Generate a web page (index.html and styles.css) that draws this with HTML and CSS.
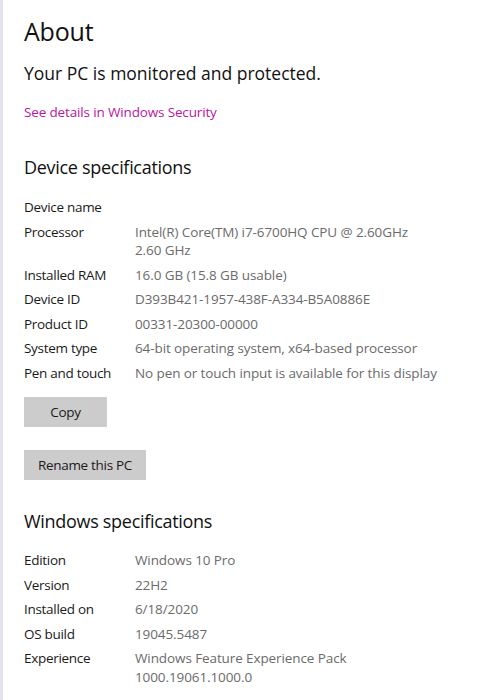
FILE: index.html
```html
<!DOCTYPE html>
<html>
<head>
<meta charset="utf-8">
<link rel="stylesheet" href="styles.css">
</head>
<body>
<div class="page">
  <h1 class="title">About</h1>
  <p class="status">Your PC is monitored and protected.</p>
  <a class="link" href="#">See details in Windows Security</a>

  <h2 class="section">Device specifications</h2>
  <div class="specs">
    <div class="row"><div class="label">Device name</div><div class="value"></div></div>
    <div class="row"><div class="label">Processor</div><div class="value">Intel(R) Core(TM) i7-6700HQ CPU @ 2.60GHz<br>2.60 GHz</div></div>
    <div class="row"><div class="label">Installed RAM</div><div class="value">16.0 GB (15.8 GB usable)</div></div>
    <div class="row"><div class="label">Device ID</div><div class="value">D393B421-1957-438F-A334-B5A0886E</div></div>
    <div class="row"><div class="label">Product ID</div><div class="value">00331-20300-00000</div></div>
    <div class="row"><div class="label">System type</div><div class="value">64-bit operating system, x64-based processor</div></div>
    <div class="row"><div class="label">Pen and touch</div><div class="value">No pen or touch input is available for this display</div></div>
  </div>
  <button class="btn btn-copy">Copy</button>
  <button class="btn btn-rename">Rename this PC</button>

  <h2 class="section section-win">Windows specifications</h2>
  <div class="specs specs-win">
    <div class="row"><div class="label">Edition</div><div class="value">Windows 10 Pro</div></div>
    <div class="row"><div class="label">Version</div><div class="value">22H2</div></div>
    <div class="row"><div class="label">Installed on</div><div class="value">6/18/2020</div></div>
    <div class="row"><div class="label">OS build</div><div class="value">19045.5487</div></div>
    <div class="row"><div class="label">Experience</div><div class="value">Windows Feature Experience Pack<br>1000.19061.1000.0</div></div>
  </div>
</div>
</body>
</html>
```
FILE: styles.css
```css
html, body {
  margin: 0;
  padding: 0;
  background: #ffffff;
}
body {
  font-family: "Open Sans", "Noto Sans", sans-serif;
  color: #111111;
}
.page {
  border-left: 3px solid #e4e2ea;
  min-height: 700px;
  box-sizing: border-box;
  padding: 13px 0 0 21px;
  display: flex;
  flex-direction: column;
  align-items: flex-start;
}
.title {
  margin: 0;
  font-size: 25px;
  font-weight: 400;
  line-height: 36px;
  letter-spacing: -0.2px;
}
.status {
  margin: 12px 0 0 0;
  font-size: 17.5px;
  line-height: 24px;
  letter-spacing: 0;
}
.link {
  margin-top: 17px;
  font-size: 13.5px;
  line-height: 20px;
  color: #b8179f;
  text-decoration: none;
  letter-spacing: -0.15px;
}
.section {
  margin: 32px 0 0 0;
  font-size: 18px;
  font-weight: 400;
  line-height: 26px;
  letter-spacing: -0.3px;
}
.section-win {
  margin-top: 28px;
}
.specs {
  margin-top: 18px;
  display: flex;
  flex-direction: column;
  gap: 6px;
}
.specs-win {
  margin-top: 17px;
}
.row {
  display: grid;
  grid-template-columns: 111px 1fr;
  font-size: 13.5px;
  line-height: 18.5px;
}
.label {
  color: #1a1a1a;
  letter-spacing: -0.3px;
}
.value {
  color: #6b6b6b;
  min-height: 18.5px;
  letter-spacing: -0.1px;
}
.btn {
  border: none;
  background: #cccccc;
  color: #1a1a1a;
  font-family: "Open Sans", "Noto Sans", sans-serif;
  font-size: 13.5px;
  letter-spacing: -0.3px;
  height: 30px;
  padding: 0;
}
.btn-copy {
  margin-top: 15px;
  width: 83px;
}
.btn-rename {
  margin-top: 23px;
  width: 122px;
}
```
